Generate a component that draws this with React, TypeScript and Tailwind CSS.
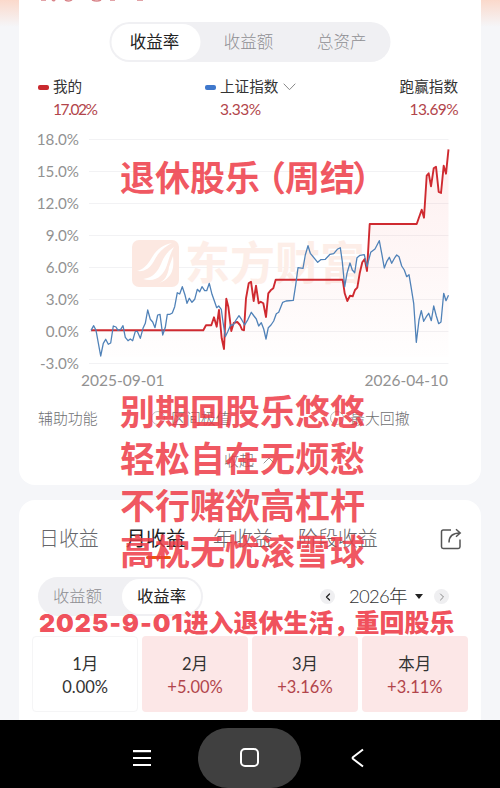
import { ChevronLeft, ChevronRight } from 'lucide-react';

// === ДАННЫЕ ===

const AXIS = ['18.0%', '15.0%', '12.0%', '9.0%', '6.0%', '3.0%', '0.0%', '-3.0%'];

const MONTHS = [
  { name: '1月', value: '0.00%', up: false },
  { name: '2月', value: '+5.00%', up: true },
  { name: '3月', value: '+3.16%', up: true },
  { name: '本月', value: '+3.11%', up: true },
];

const VERSES = ['别期回股乐悠悠', '轻松自在无烦愁', '不行赌欲高杠杆', '高枕无忧滚雪球'];

const MINE =
  '91,330.3 203.3,330.3 206,325.3 211.3,325.3 214,317.3 216.7,326.7 219,310 221.7,338.3 224,349 226.3,298.7 228.3,306.7 231.3,331 233.7,323 237.3,322 240,325 242,329.7 244,330.3 246,298.3 248.7,283.3 251,281.7 253.7,301 256,285.7 258.7,303.3 260.7,301.7 263.3,303.3 266,317 268.3,293.3 270.7,290.3 273.3,288.3 275.7,279.7 342.7,279.7 344.7,293.3 347.3,301 350,295.7 352.7,296.3 355,290 357.3,287.7 359.7,273.3 362.3,262.3 364.7,259 367,271 369.7,224 416.7,224 421.7,209.7 424,217.7 426.7,175.7 428.7,173.3 431,186.3 433.7,168.3 436,166.7 438.7,192 441,193 443.7,165.7 446,173.7 448.5,149.3';

const INDEX =
  '91,330.3 93.7,325.7 96,330.3 100.7,356 103.3,343.3 105.7,339.3 108.3,344.3 110.7,343 113.3,326 116,327 118,330.3 120.7,329.3 123,325.7 125.3,337.3 128,340.7 130.3,339 132.7,340.7 135.3,331.3 137.3,331.3 140.3,338.3 143,328.3 145.3,323.3 147.7,310 150.3,319.3 152.7,322 155,327.7 157.7,315 160,314.3 162.7,335 165.3,327.3 167.3,314.3 170,314.3 172.3,313 174.7,306.7 177.3,292.7 179.7,294 182.3,286.7 185,295 187,303.3 189.3,298.3 192,302.3 194.7,299.3 197.3,289.3 199.7,291.7 202,286.7 204.7,290.7 206.7,290.7 209.3,283.3 212,294.3 214.3,300.7 216.7,307.7 218.7,306 221.3,309.3 223,322 225.3,336.7 227.7,331.7 230.7,325 233.3,325 236,320 239,315.7 241.7,319.7 244.7,325 248,319.3 251.3,312.3 254,316 256.3,319 258.7,326 261.3,322.7 263.7,329 266,339 268.3,327.7 271,325 273.7,321 276.3,313.7 278.7,312.3 282.7,302.3 286,301 293.3,300.3 295.7,285 298,267.7 303,268.3 305.3,255 308,245.7 310.3,253.3 317.7,262.3 320.7,259.7 325.3,259.3 330,254.3 333.7,253.7 337.3,249.3 340.3,247.7 342.3,261.7 344.7,286.7 347,273.3 350,263 352.3,270 354.7,272.7 357,257.7 360,255.3 364.3,254.7 367,266.7 370.7,252.3 375,249 379.3,240.7 381.7,253.3 384.3,268 386.7,261.7 389.3,257.3 391.7,263.3 395,257.3 396.7,255 399,256.7 401.7,266 404.3,270 406.7,276.7 409,274.7 411.3,288.3 413.7,303.3 416.3,342.3 419,320 421.3,310.7 423.7,321.3 426.3,316.7 428.7,313.3 431.3,320.7 433.7,306 436.3,316 438.7,323.7 441,322 443.7,293.3 446,300.7 448.5,295.3';

// === ГРАФИК ===

function YieldChart() {
  return (
    <div className="relative h-[242px]">
      <svg className="absolute inset-0" width="462" height="242" viewBox="19 130 462 242">
        <defs>
          <linearGradient id="area" x1="0" y1="149" x2="0" y2="358" gradientUnits="userSpaceOnUse">
            <stop offset="0" stopColor="#f04040" stopOpacity="0.08" />
            <stop offset="0.6" stopColor="#f04040" stopOpacity="0.04" />
            <stop offset="1" stopColor="#f04040" stopOpacity="0.005" />
          </linearGradient>
        </defs>
        {AXIS.map((label, i) => (
          <line key={label} x1="89" x2="448.5" y1={139.5 + i * 32} y2={139.5 + i * 32} stroke="#f2f2f4" />
        ))}
        {/* Водяной знак */}
        <rect x="132" y="240" width="47" height="47" rx="7" fill="#fce8e1" />
        <path d="M137 271c7-2 10-6 14-12 5-9 11-14 21-16-11 6-15 12-18 18-4 7-9 11-17 10Z" fill="#fff" />
        <path d="M143 279c10-1 15-8 18-15 3-8 7-13 13-17-4 7-5 12-7 18-3 10-11 18-24 14Z" fill="#fff" />
        <path d="M157 284c8-3 11-9 12-17l4-11c1 11 1 22-16 28Z" fill="#fff" />
        <text x="185" y="280" fontSize="45" fontWeight="700" fill="#fdeee8" fontFamily="Noto Sans CJK SC, sans-serif">
          东方财富
        </text>
        <polygon points={`${MINE} 448.5,357 91,357`} fill="url(#area)" />
        <polyline points={MINE} fill="none" stroke="#cf2a30" strokeWidth="1.9" strokeLinejoin="round" />
        <polyline points={INDEX} fill="none" stroke="#5082b8" strokeWidth="1.3" strokeLinejoin="round" />
      </svg>
      <div className="flex w-[60px] flex-col text-right text-[15.2px] text-[#929292]">
        {AXIS.map((label, i) => (
          <span key={label} className={i === 0 ? 'h-[25px] leading-[19px]' : 'h-8 leading-8'}>
            {label}
          </span>
        ))}
      </div>
    </div>
  );
}

function YieldCard() {
  return (
    <section className="h-[485px] rounded-b-[16px] bg-white">
      <svg className="block" width="462" height="22" viewBox="19 0 462 22">
        <path
          d="M41 0h5M52 0q2 1.5 3 0M65 0q4 2 7 0M92 0q5 2 9 0M110 0h5M137 0h6"
          stroke="#d9858a"
          strokeWidth="1.5"
          fill="none"
        />
      </svg>
      <div className="mx-auto grid h-10 w-[281px] -translate-x-[0.5px] grid-cols-3 items-center rounded-full bg-[#f0f0f3] p-[2px] text-center text-[16.5px] font-light text-[#8e8e92]">
        <span className="h-9 w-[89px] rounded-full bg-white pr-[2px] leading-9 font-normal text-[#222]">收益率</span>
        <span className="pr-[2px]">收益额</span>
        <span>总资产</span>
      </div>

      {/* Легенда */}
      <div className="flex h-[68px] pt-[14px] pr-[23px] pl-[19px] text-[14.6px] leading-[22px] text-[#333]">
        <div className="w-[167px]">
          <div className="flex items-center gap-1">
            <i className="h-[5px] w-[11px] rounded-[2px] bg-[#c9292e]" />
            我的
          </div>
          <div className="pl-[15px] text-[15.5px] tracking-[-1.4px] text-[#b2454b]">17.02%</div>
        </div>
        <div className="flex-1">
          <div className="flex items-center gap-1">
            <i className="h-[5px] w-[11px] rounded-[2px] bg-[#3f78cc]" />
            上证指数
            <svg className="ml-[1px]" width="13" height="8" viewBox="0 0 13 8" fill="none" stroke="#888">
              <path d="M0.7 0.7 6.5 6.7 12.3 0.7" />
            </svg>
          </div>
          <div className="pl-[15px] text-[15.5px] tracking-[-0.5px] text-[#b2454b]">3.33%</div>
        </div>
        <div className="text-right">
          <div>跑赢指数</div>
          <div className="text-[15.5px] tracking-[-0.6px] text-[#b2454b]">13.69%</div>
        </div>
      </div>

      <YieldChart />
      <div className="flex h-[18px] justify-between pr-[33px] pl-[62px] text-[15.5px] leading-[17px] text-[#929292]">
        <span>2025-09-01</span>
        <span>2026-04-10</span>
      </div>

      <div className="mt-[18px] flex h-5 items-center pl-[19px] text-[14.9px] font-light text-[#6f6f72]">
        <span className="w-[113px]">辅助功能</span>
        <i className="mr-[6px] size-[14px] rounded-full border border-[#bbb]" />
        <span className="w-[159px]">区间极值</span>
        <i className="mr-[6px] size-[14px] rounded-full border border-[#bbb]" />
        <span>最大回撤</span>
      </div>
      <div className="mt-[22px] flex h-5 items-center gap-[9px] pl-[205px] text-[15px] font-light text-[#77777a]">
        收起
        <svg width="12" height="7" viewBox="0 0 12 7" fill="none" stroke="#999">
          <path d="M0.7 6.3 6 1 11.3 6.3" />
        </svg>
      </div>
    </section>
  );
}

// === ДОХОД ПО МЕСЯЦАМ ===

function MonthCard() {
  return (
    <section className="mt-[15px] h-[220px] rounded-t-[16px] bg-white">
      <div className="flex h-[77px] items-center pl-[20px] text-[19.9px] font-light text-[#66666a]">
        <span className="w-[87px]">日收益</span>
        <span className="relative w-[87px] font-normal text-[#1d1d1f]">
          月收益
          <i className="absolute top-[32px] left-[20px] h-[3px] w-[25px] rounded-full bg-[#e8590c]" />
        </span>
        <span className="w-[85px]">年收益</span>
        <span>阶段收益</span>
        <svg className="ml-auto mr-[19px]" width="22" height="22" viewBox="0 0 22 22" fill="none" stroke="#555" strokeWidth="1.5">
          <path d="M11 2H3.2Q1.5 2 1.5 3.7V18.8Q1.5 20.5 3.2 20.5H18.3Q20 20.5 20 18.8V11.5" />
          <path d="M9 14.5C9 8.5 12.5 5 20 5M16 1.2 20.2 5 16 8.8" />
        </svg>
      </div>

      <div className="flex h-[39px] items-center pl-[19px]">
        <div className="flex h-[39px] w-[165px] items-center rounded-full bg-[#f0f0f3] p-[2px] text-center text-[16.4px] font-light text-[#8e8e92]">
          <span className="w-[75px]">收益额</span>
          <span className="ml-auto h-[35px] w-[79px] rounded-full bg-white leading-[34px] font-normal text-[#222]">收益率</span>
        </div>
        <div className="ml-[117px] flex size-[15px] items-center justify-center rounded-full bg-[#efeff1]">
          <ChevronLeft size={12} strokeWidth={2.6} color="#222" />
        </div>
        <span className="ml-[14px] text-[18.5px] font-light tracking-[-0.7px] text-[#333]">2026年</span>
        <i className="ml-[8px] border-x-[4.5px] border-t-[5px] border-x-transparent border-t-[#222]" />
        <div className="ml-auto mr-[32px] flex size-[15px] items-center justify-center rounded-full bg-[#efeff1]">
          <ChevronRight size={12} strokeWidth={2} color="#888" />
        </div>
      </div>

      <div className="mt-[20px] grid h-[76px] grid-cols-4 gap-[3.5px] pr-[13px] pl-[13px] text-center text-[16.5px] leading-[23px]">
        {MONTHS.map((m) => (
          <div
            key={m.name}
            className={
              m.up
                ? 'rounded-[4px] bg-[#fce7e7] pt-[17px] text-[#333]'
                : 'rounded-[4px] border border-[#f5f5f6] pt-[16px] text-[#333]'
            }
          >
            <div>{m.name}</div>
            <div className={m.up ? 'text-[#b2454b]' : ''}>{m.value}</div>
          </div>
        ))}
      </div>
    </section>
  );
}

function SystemBar() {
  return (
    <nav className="flex h-[68px] items-center bg-black pl-[132px]">
      <svg className="mt-2" width="19" height="18" viewBox="0 0 19 18" stroke="#fff" strokeWidth="2.2">
        <path d="M1 2.1H19M1 9H19M1 16H19" />
      </svg>
      <div className="mt-2 ml-[47px] flex h-[60px] w-[103px] items-center justify-center rounded-[30px] bg-[#404040]">
        <i className="mb-[2px] size-[19px] rounded-[5px] border-2 border-white" />
      </div>
      <svg className="mt-2 ml-[50px]" width="13" height="20" viewBox="0 0 13 20" fill="none" stroke="#fff" strokeWidth="2">
        <path d="M12 1.5 2.2 9Q1 10 2.2 11L12 18.5" />
      </svg>
    </nav>
  );
}

export default function App() {
  return (
    <div className="relative h-[788px] w-[500px] overflow-hidden bg-[#f5f6f9] font-['Lato','Noto_Sans_CJK_SC',sans-serif] whitespace-nowrap">
      <div className="h-[720px] bg-[linear-gradient(#fbd9cb_0px,#f5f6f9_27px)] px-[19px]">
        <YieldCard />
        <MonthCard />
      </div>
      <SystemBar />

      {/* Подписи поверх экрана */}
      <div className="absolute top-[154px] left-[120px] text-[35px] leading-[47px] font-bold text-[#ee3a46]/85">
        退休股乐<span className="-ml-[9px]">（</span>
        <span className="-ml-[1px]">周结</span>
        <span className="-ml-[3px]">）</span>
      </div>
      <div className="absolute top-[388px] left-[120px] text-[35px] leading-[46.8px] font-bold text-[#ee3a46]/85">
        {VERSES.map((v) => (
          <div key={v}>{v}</div>
        ))}
      </div>
      <div className="absolute top-[605px] left-[39px] text-[25px] leading-[34px] font-black text-[#ee3a46]/90">
        <span className="font-['Inter'] tracking-[0.9px]">2025-9-01</span>
        进入退休生活<span className="-mr-[4px]">，</span>重回股乐
      </div>
    </div>
  );
}
